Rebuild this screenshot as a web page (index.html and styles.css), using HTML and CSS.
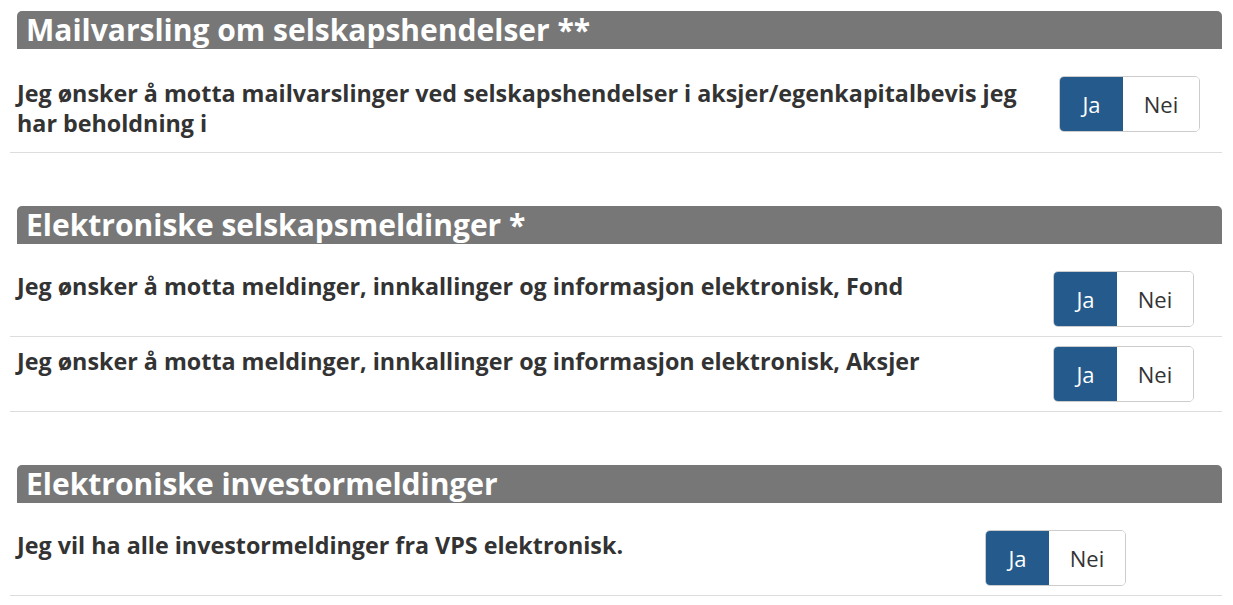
FILE: index.html
```html
<!DOCTYPE html>
<html lang="nb">
    <head>
        <meta charset="UTF-8">
        <meta name="viewport" content="width=device-width, initial-scale=1.0">
        <title>Varslinger</title>
        <link rel="stylesheet" href="styles.css">
    </head>
    <body>
        <div class="container">

            <div class="section">
                <h2 class="section-title">Mailvarsling om selskapshendelser **</h2>
                <div class="setting-row">
                    <label class="setting-label wrap-narrow">Jeg ønsker å motta mailvarslinger ved selskapshendelser i aksjer/egenkapitalbevis jeg har beholdning i</label>
                    <div class="toggle toggle-r1">
                        <button class="toggle-btn yes active">Ja</button>
                        <button class="toggle-btn no">Nei</button>
                    </div>
                </div>
            </div>

            <div class="section">
                <h2 class="section-title">Elektroniske selskapsmeldinger *</h2>
                <div class="setting-row">
                    <label class="setting-label">Jeg ønsker å motta meldinger, innkallinger og informasjon elektronisk, Fond</label>
                    <div class="toggle toggle-r2">
                        <button class="toggle-btn yes active">Ja</button>
                        <button class="toggle-btn no">Nei</button>
                    </div>
                </div>
                <div class="setting-row">
                    <label class="setting-label">Jeg ønsker å motta meldinger, innkallinger og informasjon elektronisk, Aksjer</label>
                    <div class="toggle toggle-r2">
                        <button class="toggle-btn yes active">Ja</button>
                        <button class="toggle-btn no">Nei</button>
                    </div>
                </div>
            </div>

            <div class="section">
                <h2 class="section-title">Elektroniske investormeldinger</h2>
                <div class="setting-row">
                    <label class="setting-label">Jeg vil ha alle investormeldinger fra VPS elektronisk.</label>
                    <div class="toggle toggle-r3">
                        <button class="toggle-btn yes active">Ja</button>
                        <button class="toggle-btn no">Nei</button>
                    </div>
                </div>
            </div>

        </div>
    </body>
</html>
```

FILE: styles.css
```css
body {
    font-family: 'Open Sans', 'Noto Sans', sans-serif;
    margin: 0;
    background-color: #fff;
    color: #333;
}

.container {
    padding: 11px 11px 0 10px;
}

.section {
    margin-bottom: 53px;
}

.section:last-child {
    margin-bottom: 0;
}

.section-title {
    margin: 0 0 18px 7px;
    height: 38px;
    line-height: 38px;
    padding-left: 9px;
    background-color: #777;
    color: #fff;
    font-size: 30px;
    font-weight: 700;
    border-radius: 5px 5px 0 0;
}

.setting-row {
    display: flex;
    align-items: flex-start;
    justify-content: space-between;
    padding: 9px 0;
    border-bottom: 1px solid #ddd;
}

.setting-label {
    flex: 1;
    padding-left: 7px;
    margin-bottom: 7px;
    font-size: 23.3px;
    font-weight: 700;
    line-height: 30px;
}

.wrap-narrow {
    max-width: 1014px;
    padding-top: 2px;
    margin-bottom: 5px;
}

.toggle {
    display: flex;
    height: 56px;
    border: 1px solid #ccc;
    border-radius: 5px;
    overflow: hidden;
    box-sizing: border-box;
}

.toggle-r1 {
    margin-right: 22px;
}

.toggle-r2 {
    margin-right: 28px;
}

.toggle-r3 {
    margin-right: 96px;
}

.toggle-btn {
    border: none;
    padding: 0;
    font-family: inherit;
    font-size: 22px;
    background-color: #fff;
    color: #333;
    cursor: pointer;
}

.toggle-btn.yes {
    width: 63px;
}

.toggle-btn.no {
    width: 76px;
}

.toggle-btn.active {
    background-color: #245b8c;
    color: #fff;
}
```
